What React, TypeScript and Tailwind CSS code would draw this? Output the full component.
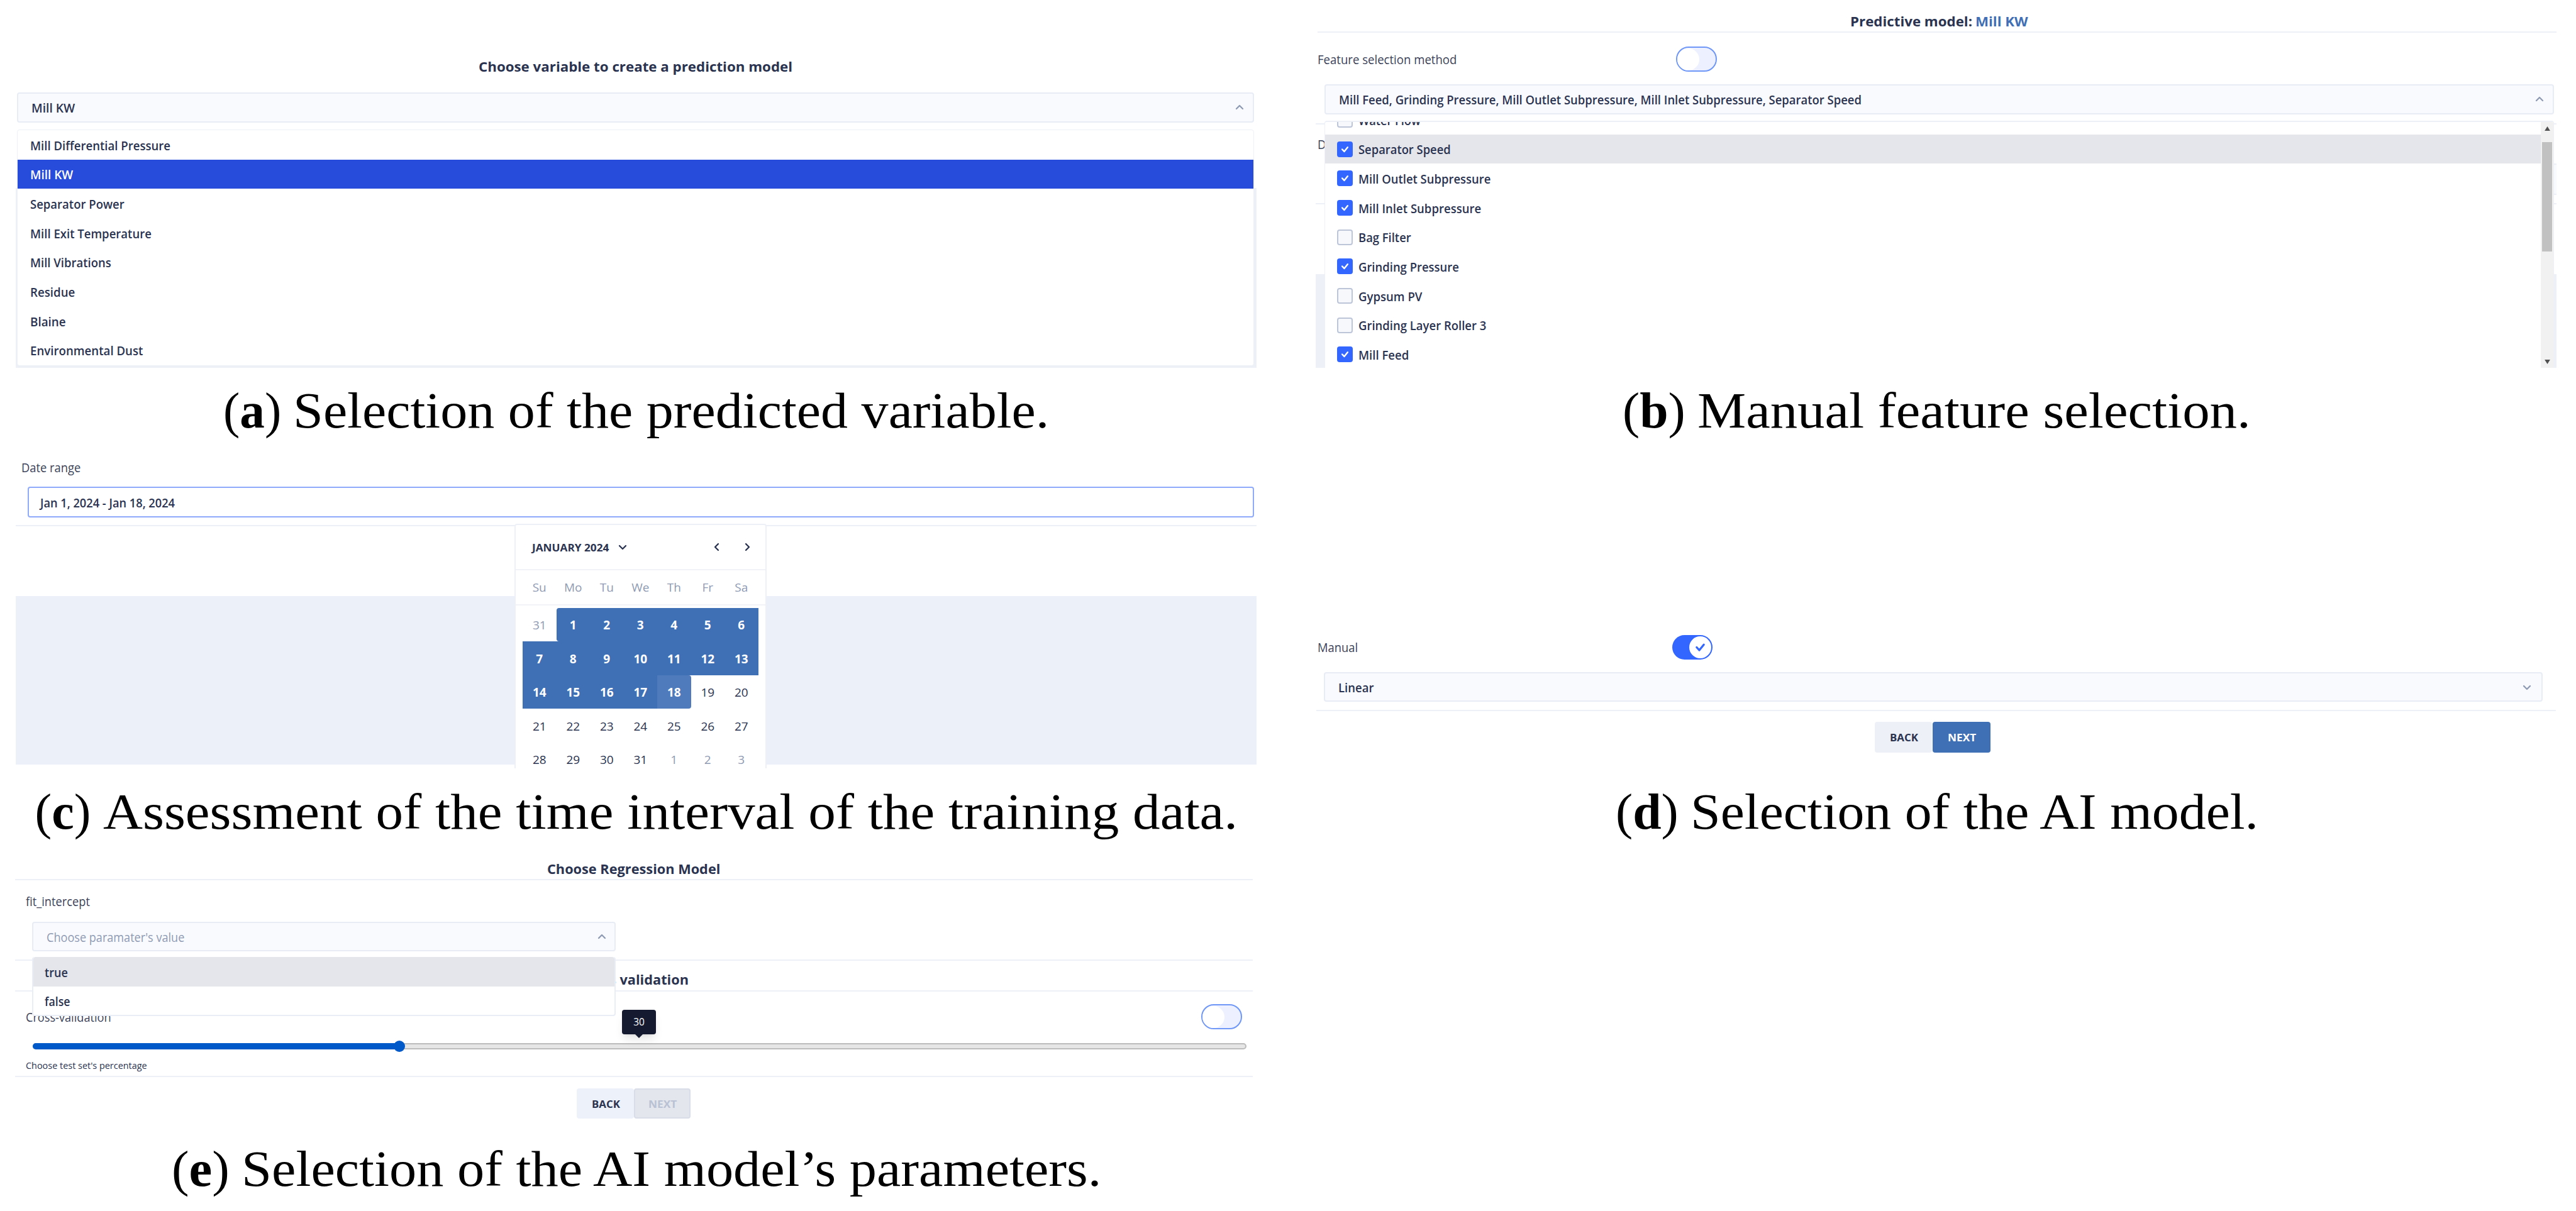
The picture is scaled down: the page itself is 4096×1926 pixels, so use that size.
import { useLayoutEffect, useRef, useState } from "react"
import type { ReactNode } from "react"

type FitProps = { w: number; className?: string; children: ReactNode }

// Single line of text, stretched horizontally so that it takes exactly `w` pixels
function Fit({ w, className = "", children }: FitProps) {
  const ref = useRef<HTMLSpanElement>(null)
  const [scale, setScale] = useState(1)

  useLayoutEffect(() => {
    if (ref.current) setScale(w / ref.current.offsetWidth)
  }, [w])

  return (
    <span className={`block shrink-0 whitespace-nowrap ${className}`} style={{ width: w }}>
      <span ref={ref} className="inline-block origin-left" style={{ transform: `translateY(1px) scaleX(${scale})` }}>
        {children}
      </span>
    </span>
  )
}

type Direction = "up" | "down" | "left" | "right"

const CHEVRONS: Record<Direction, string> = {
  up: "M5 12 L10 7 L15 12",
  down: "M5 8 L10 13 L15 8",
  left: "M12 5 L7 10 L12 15",
  right: "M8 5 L13 10 L8 15",
}

function Chevron({ dir, className = "" }: { dir: Direction; className?: string }) {
  return (
    <svg viewBox="0 0 20 20" className={`size-5 shrink-0 ${className}`} fill="none">
      <path d={CHEVRONS[dir]} stroke="currentColor" strokeWidth="2.3" strokeLinecap="round" strokeLinejoin="round" />
    </svg>
  )
}

function Check({ className }: { className: string }) {
  return (
    <svg viewBox="0 0 12 12" className={className} fill="none">
      <path d="M2 6 L5 9.2 L10 3" stroke="currentColor" strokeWidth="2.3" strokeLinecap="round" strokeLinejoin="round" />
    </svg>
  )
}

function Rule({ className = "" }: { className?: string }) {
  return <div className={`h-[2px] shrink-0 bg-[#edf0f7] ${className}`} />
}

type CaptionProps = { letter: string; letterW: number; w: number; children: string }

function Caption({ letter, letterW, w, children }: CaptionProps) {
  return (
    <div className="flex w-[2023px] items-center justify-center gap-[19px] font-['Liberation_Serif',serif] text-[80px] leading-none text-black">
      <Fit w={letterW}>
        (<b>{letter}</b>)
      </Fit>
      <Fit w={w}>{children}</Fit>
    </div>
  )
}

function Toggle({ on = false, className = "" }: { on?: boolean; className?: string }) {
  if (on) {
    return (
      <div className={`flex h-[39px] w-[64px] shrink-0 items-center justify-end rounded-full bg-[#3366ff] pr-[2px] ${className}`}>
        <div className="flex size-[35px] items-center justify-center rounded-full bg-white text-[#3366ff]">
          <Check className="size-[17px]" />
        </div>
      </div>
    )
  }
  return (
    <div className={`flex h-[40px] w-[65px] shrink-0 items-center rounded-full border-2 border-[#6f97f8] bg-[#edf1ff] ${className}`}>
      <div className="size-[35px] rounded-full bg-white" />
    </div>
  )
}

type SelectProps = { label: string; w: number; dir: Direction; className: string; textClass?: string }

function Select({ label, w, dir, className, textClass = "font-semibold text-[#2a3350]" }: SelectProps) {
  return (
    <div className={`flex shrink-0 items-center justify-between rounded-[4px] border-2 border-[#e8ecf5] bg-[#f9fafe] ${className}`}>
      <Fit w={w} className={textClass}>{label}</Fit>
      <Chevron dir={dir} className="text-[#8f9bb3]" />
    </div>
  )
}

const VARIABLES = [
  { name: "Mill Differential Pressure", w: 223 },
  { name: "Mill KW", w: 68 },
  { name: "Separator Power", w: 150 },
  { name: "Mill Exit Temperature", w: 193 },
  { name: "Mill Vibrations", w: 129 },
  { name: "Residue", w: 71 },
  { name: "Blaine", w: 57 },
  { name: "Environmental Dust", w: 179 },
]

function VariablePanel() {
  return (
    <section className="relative">
      <div className="mt-[84px] ml-[761px] flex h-10 items-center text-[22px] font-bold">
        <Fit w={499}>Choose variable to create a prediction model</Fit>
      </div>
      <Select label="Mill KW" w={69} dir="up" className="mt-[23px] ml-[27px] h-[48px] w-[1967px] pr-[11px] pl-[21px]" />
      <div className="absolute top-[299px] left-[25px] h-[286px] w-[1973px] bg-[#edf1f7]" />
      <div className="relative mt-[11px] ml-[27px] w-[1967px] rounded-[4px] border border-[#edf0f6] bg-white">
        {VARIABLES.map(({ name, w }) => (
          <div
            key={name}
            className={`flex h-[46.7px] items-center pl-[20px] font-semibold ${name === "Mill KW" ? "bg-[#274bdb] text-white" : ""}`}
          >
            <Fit w={w}>{name}</Fit>
          </div>
        ))}
      </div>
    </section>
  )
}

const FEATURES = [
  { name: "Water Flow", w: 99, checked: false },
  { name: "Separator Speed", w: 147, checked: true },
  { name: "Mill Outlet Subpressure", w: 210, checked: true },
  { name: "Mill Inlet Subpressure", w: 195, checked: true },
  { name: "Bag Filter", w: 84, checked: false },
  { name: "Grinding Pressure", w: 160, checked: true },
  { name: "Gypsum PV", w: 101, checked: false },
  { name: "Grinding Layer Roller 3", w: 203, checked: false },
  { name: "Mill Feed", w: 80, checked: true },
]

function FeaturePanel() {
  return (
    <section className="relative flex flex-col">
      <div className="mt-[15px] ml-[874px] flex h-[35px] items-center gap-[5px] text-[21.5px] font-bold">
        <Fit w={194}>Predictive model:</Fit>
        <Fit w={84} className="text-[#3f6fb5]">Mill KW</Fit>
      </div>
      <Rule className="ml-[27px] w-[1970px]" />
      <div className="flex h-[84px] items-center pl-[27px]">
        <Fit w={221} className="text-[19.5px] text-[#3c4358]">Feature selection method</Fit>
        <Toggle className="ml-[349px]" />
      </div>
      <Select
        label="Mill Feed, Grinding Pressure, Mill Outlet Subpressure, Mill Inlet Subpressure, Separator Speed"
        w={831}
        dir="up"
        className="-mt-[2px] ml-[38px] h-[48px] w-[1955px] pr-[11px] pl-[21px]"
      />

      {/* date range step, mostly hidden by the open menu */}
      <Rule className="mt-[14px] ml-[24px] w-[1973px]" />
      <div className="flex h-[62px] items-center pl-[27px] text-[19.5px] text-[#3c4358]">
        <Fit w={95}>Date range</Fit>
      </div>
      <div className="ml-[38px] h-[50px] w-[1959px] border-y-2 border-[#edf0f7] bg-[#f9fafe]" />
      <Rule className="mt-[13px] ml-[24px] w-[1973px]" />
      <div className="mt-[111px] ml-[24px] h-[149px] w-[1973px] bg-[#edf1f7]" />

      <div className="absolute top-[192px] left-[38px] flex h-[393px] w-[1955px] overflow-hidden rounded-t-[4px] border-x border-t-2 border-[#edf0f6] bg-white">
        <div className="-mt-[27px] grow">
          {FEATURES.map(({ name, w, checked }) => (
            <div
              key={name}
              className={`flex h-[46.7px] items-center gap-[9px] pl-[19px] font-semibold ${name === "Separator Speed" ? "bg-[#e4e6ec]" : ""}`}
            >
              <div
                className={`flex size-[25px] shrink-0 items-center justify-center rounded-[4px] text-white ${checked ? "bg-[#3366ff]" : "border-2 border-[#bdc5d8] bg-[#f6f8fb]"}`}
              >
                {checked && <Check className="size-[13px]" />}
              </div>
              <Fit w={w}>{name}</Fit>
            </div>
          ))}
        </div>
        <div className="flex w-[20px] shrink-0 flex-col items-center bg-[#f1f1f1]">
          <svg viewBox="0 0 10 8" className="mt-[7px] h-[7px] w-[9px]"><path d="M5 0 L10 8 H0 Z" fill="#505050" /></svg>
          <div className="mt-[18px] h-[174px] w-[16px] bg-[#c1c1c1]" />
          <svg viewBox="0 0 10 8" className="mt-auto mb-[6px] h-[7px] w-[9px]"><path d="M5 8 L0 0 H10 Z" fill="#505050" /></svg>
        </div>
      </div>
    </section>
  )
}

const WEEKDAYS = ["Su", "Mo", "Tu", "We", "Th", "Fr", "Sa"]

// Dec 31 to Feb 3: offset 0 is the last day of the previous month
const DAYS = Array.from({ length: 35 }, (_, i) => ({
  offset: i,
  label: i === 0 ? 31 : i > 31 ? i - 31 : i,
}))

function dayClass(offset: number) {
  if (offset === 0 || offset > 31) return "text-[#8f9bb3]"
  if (offset === 1) return "rounded-l-[4px] bg-[#3f6fb5] font-bold text-white"
  if (offset === 18) return "rounded-r-[4px] bg-[#4f7bbd] font-bold text-white"
  if (offset < 18) return "bg-[#3f6fb5] font-bold text-white"
  return ""
}

function Calendar() {
  return (
    <div className="absolute top-[114px] left-[818px] h-[389px] w-[401px] overflow-hidden rounded-t-[4px] border-2 border-b-0 border-[#edf0f7] bg-white">
      <div className="flex h-[72px] items-center border-b-2 border-[#f1f3f8] pl-[26px] text-[16.5px] font-bold">
        <Fit w={122}>JANUARY 2024</Fit>
        <Chevron dir="down" className="ml-[12px]" />
        <Chevron dir="left" className="ml-[130px]" />
        <Chevron dir="right" className="ml-[28px]" />
      </div>
      <div className="flex h-[56px] items-center border-b-2 border-[#f1f3f8] pt-px pl-[11px] text-[19px] font-medium text-[#8f9bb3]">
        {WEEKDAYS.map((day) => (
          <div key={day} className="w-[53.5px] text-center">{day}</div>
        ))}
      </div>
      <div className="mt-[4px] ml-[11px] grid w-[374.5px] grid-cols-7 text-[19px] font-medium">
        {DAYS.map(({ offset, label }) => (
          <div key={offset} className={`flex h-[53.45px] items-center justify-center pt-[2px] ${dayClass(offset)}`}>
            {label}
          </div>
        ))}
      </div>
    </div>
  )
}

function DateRangePanel() {
  return (
    <section className="relative flex flex-col">
      <div className="flex h-[48px] items-center pl-[34px] text-[19.5px] text-[#3c4358]">
        <Fit w={94}>Date range</Fit>
      </div>
      <div className="mt-[7px] ml-[44px] flex h-[49px] w-[1950px] items-center rounded-[4px] border-2 border-[#8faafa] bg-white pl-[18px] font-semibold">
        <Fit w={214}>Jan 1, 2024 - Jan 18, 2024</Fit>
      </div>
      <Rule className="mt-[12px] ml-[25px] w-[1973px]" />
      <div className="mt-[111px] ml-[25px] h-[268px] w-[1973px] bg-[#ecf0f8]" />
      <Calendar />
    </section>
  )
}

function ModelPanel() {
  return (
    <section className="flex flex-col pt-[290px]">
      <div className="flex h-10 items-center pl-[27px]">
        <Fit w={64} className="text-[19.5px] text-[#3c4358]">Manual</Fit>
        <Toggle on className="ml-[500px]" />
      </div>
      <Select label="Linear" w={56} dir="down" className="mt-[20px] ml-[37px] h-[47px] w-[1938px] pr-[13px] pl-[21px]" />
      <Rule className="mt-[13px] ml-[25px] w-[1971px]" />
      <div className="mt-[17px] ml-[913px] flex gap-px text-[16.5px] font-bold">
        <button type="button" className="flex h-[49px] w-[91px] items-center justify-center rounded-[4px] bg-[#edf1f7]">
          <Fit w={45}>BACK</Fit>
        </button>
        <button type="button" className="flex h-[49px] w-[92px] items-center justify-center rounded-[4px] bg-[#3f6fb5] text-white">
          <Fit w={45}>NEXT</Fit>
        </button>
      </div>
    </section>
  )
}

function ParametersPanel() {
  return (
    <section className="relative flex flex-col">
      <div className="flex h-[40px] items-center pt-[5px] pl-[870px] text-[21.5px] font-bold">
        <Fit w={275}>Choose Regression Model</Fit>
      </div>
      <Rule className="ml-[24px] w-[1968px]" />
      <div className="flex h-[66px] items-center pl-[41px] text-[19.5px] text-[#3c4358]">
        <Fit w={102}>fit_intercept</Fit>
      </div>
      <Select
        label="Choose paramater's value"
        w={219}
        dir="up"
        className="ml-[51px] h-[47px] w-[928px] pr-[10px] pl-[21px]"
        textClass="text-[#8f9bb3]"
      />
      <Rule className="mt-[13px] ml-[24px] w-[1968px]" />
      <div className="flex h-[47px] items-center pt-[11px] pl-[921px] text-[21.5px] font-bold">
        <Fit w={174}>Cross validation</Fit>
      </div>
      <Rule className="ml-[24px] w-[1968px]" />
      <div className="flex h-[80px] items-center pl-[41px]">
        <Fit w={136} className="text-[19.5px] text-[#3c4358]">Cross-validation</Fit>
        <Toggle className="ml-[1733px]" />
      </div>

      <div className="relative mt-[2px] ml-[52px] h-[10px] w-[1930px] shrink-0 rounded-full border-2 border-[#bcbcbc] bg-[#e6e6e6]">
        <div className="absolute -top-[2px] -left-[2px] h-[10px] w-[583px] rounded-full bg-[#0059c8]" />
        <div className="absolute -top-[6px] left-[572px] size-[18px] rounded-full bg-[#0059c8]" />
      </div>
      <div className="flex h-[42px] items-center pt-[8px] pl-[41px] text-[14.5px]">
        <Fit w={193}>Choose test set's percentage</Fit>
      </div>
      <Rule className="ml-[24px] w-[1968px]" />
      <div className="mt-[18px] ml-[917px] flex text-[16.5px] font-bold">
        <button type="button" className="flex h-[48px] w-[91px] items-center justify-center rounded-[4px] bg-[#edf1f9]">
          <Fit w={45}>BACK</Fit>
        </button>
        <button type="button" disabled className="flex h-[48px] w-[90px] items-center justify-center rounded-[4px] border-2 border-[#d8dde7] bg-[#e3e6ec] text-[#b9c2d4]">
          <Fit w={45}>NEXT</Fit>
        </button>
      </div>

      <div className="absolute top-[164px] left-[51px] w-[928px] rounded-[4px] border-2 border-t-0 border-[#e9edf5] bg-white font-semibold">
        <div className="flex h-[47px] items-center rounded-t-[4px] bg-[#e4e6ec] pt-px pl-[18px]">
          <Fit w={37}>true</Fit>
        </div>
        <div className="flex h-[45px] items-center pl-[18px]">
          <Fit w={41}>false</Fit>
        </div>
      </div>

      <div className="absolute top-[248px] left-[989px] flex h-[39px] w-[54px] items-center justify-center rounded-[4px] bg-[#151a30] text-[15.5px] text-white shadow-lg">
        30
        <svg viewBox="0 0 14 7" className="absolute top-[38px] left-[20px] h-[7px] w-[14px]"><path d="M0 0 H14 L7 7 Z" fill="#151a30" /></svg>
      </div>
    </section>
  )
}

export default function App() {
  return (
    <main className="grid h-[1926px] w-[4096px] grid-cols-[2068px_2028px] grid-rows-[585px_134px_503px_136px_432px_136px] overflow-hidden bg-white font-['Open_Sans',sans-serif] text-[19.5px] leading-none text-[#2a3350]">
      <VariablePanel />
      <FeaturePanel />
      <Caption letter="a" letterW={92} w={1202}>Selection of the predicted variable.</Caption>
      <Caption letter="b" letterW={100} w={880}>Manual feature selection.</Caption>
      <DateRangePanel />
      <ModelPanel />
      <Caption letter="c" letterW={89} w={1804}>Assessment of the time interval of the training data.</Caption>
      <Caption letter="d" letterW={100} w={903}>Selection of the AI model.</Caption>
      <ParametersPanel />
      <div />
      <Caption letter="e" letterW={92} w={1367}>Selection of the AI model’s parameters.</Caption>
    </main>
  )
}
